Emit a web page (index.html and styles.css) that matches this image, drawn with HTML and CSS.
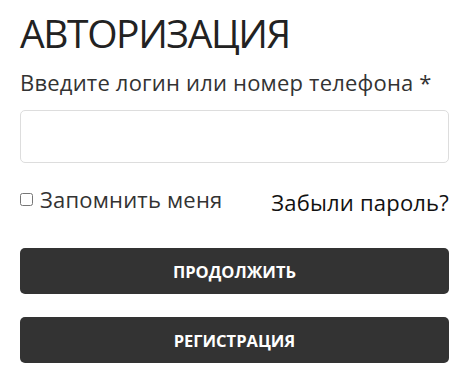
FILE: index.html
```html
<!DOCTYPE html>
<html lang="ru">
<head>
  <meta charset="UTF-8" />
  <meta name="viewport" content="width=device-width, initial-scale=1" />
  <title>Авторизация</title>
  <link rel="stylesheet" href="styles.css">
</head>
<body>
  <form class="login-form">
    <h1>АВТОРИЗАЦИЯ</h1>
    <label class="field-label" for="login">Введите логин или номер телефона *</label>
    <input class="field-input" type="text" id="login" />

    <div class="form-row">
      <label class="remember">
        <input type="checkbox" /> Запомнить меня
      </label>
      <a class="forgot" href="#">Забыли пароль?</a>
    </div>

    <button type="button" class="btn">Продолжить</button>
    <button type="button" class="btn">Регистрация</button>
  </form>
</body>
</html>
```

FILE: styles.css
```css
body {
  margin: 0;
  font-family: 'Open Sans', 'Noto Sans', sans-serif;
  background: #fff;
  color: #333;
}

.login-form {
  display: flex;
  flex-direction: column;
  width: 429px;
  padding: 5px 0 0 20px;
}

.login-form h1 {
  margin: 0;
  font-size: 39px;
  font-weight: 500;
  letter-spacing: -1.4px;
  line-height: 56px;
  color: #222;
}

.field-label {
  font-size: 22px;
  letter-spacing: 0.2px;
  line-height: 28px;
  margin-top: 6.5px;
}

.field-input {
  box-sizing: border-box;
  height: 53px;
  margin-top: 14.5px;
  border: 1px solid #ddd;
  border-radius: 5px;
  font-size: 18px;
  padding: 0 12px;
}

.form-row {
  display: flex;
  justify-content: space-between;
  align-items: flex-start;
  margin-top: 20.5px;
  font-size: 22px;
  letter-spacing: 0.2px;
  line-height: 30px;
}

.remember {
  display: flex;
  align-items: center;
  gap: 7px;
  color: #333;
}

.remember input {
  margin: 2px 0 0;
  width: 13px;
  height: 13px;
}

.forgot {
  color: #111;
  text-decoration: none;
  margin-top: 3px;
}

.btn {
  height: 46px;
  margin-top: 31.5px;
  border: none;
  border-radius: 5px;
  background: #333;
  color: #fff;
  font-family: 'Open Sans', 'Noto Sans', sans-serif;
  font-size: 16.5px;
  font-weight: 700;
  text-transform: uppercase;
  cursor: pointer;
}

.btn + .btn {
  margin-top: 23px;
}
```
